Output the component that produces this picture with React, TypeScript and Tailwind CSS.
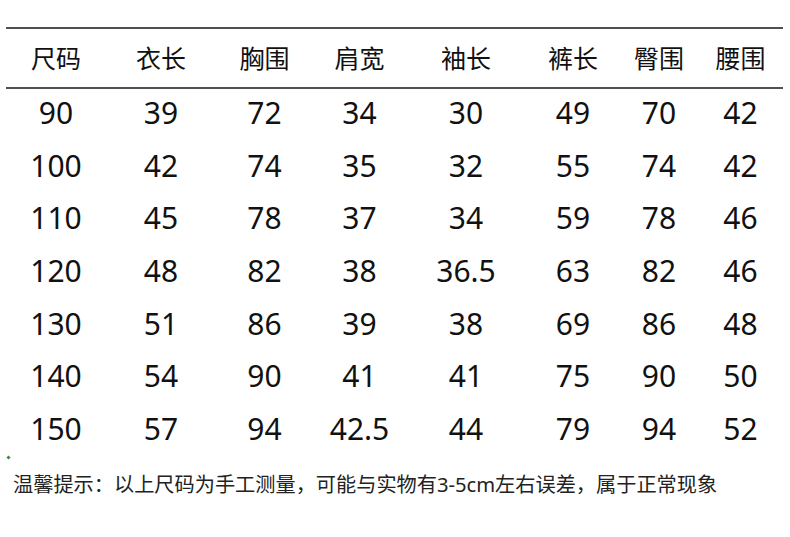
import React from "react";

const headers = ["尺码", "衣长", "胸围", "肩宽", "袖长", "裤长", "臀围", "腰围"];
const rows = [
  ["90", "39", "72", "34", "30", "49", "70", "42"],
  ["100", "42", "74", "35", "32", "55", "74", "42"],
  ["110", "45", "78", "37", "34", "59", "78", "46"],
  ["120", "48", "82", "38", "36.5", "63", "82", "46"],
  ["130", "51", "86", "39", "38", "69", "86", "48"],
  ["140", "54", "90", "41", "41", "75", "90", "50"],
  ["150", "57", "94", "42.5", "44", "79", "94", "52"],
];
const widths = ["w-[100px]", "w-[110px]", "w-[97px]", "w-[93px]", "w-[120px]", "w-[94px]", "w-[78px]", "w-[85px]"];

export default function App() {
  return (
    <div
      className="w-[790px] h-[537px] bg-white text-[#111] relative overflow-hidden"
      style={{ fontFamily: '"Noto Sans", "Noto Sans CJK SC", sans-serif' }}
    >
      <div className="pt-[27px] pl-[6px] w-[783px]">
        <div className="border-t-2 border-b-2 border-[#505050] h-[62px] flex items-center">
          {headers.map((h, i) => (
            <div key={i} className={`${widths[i]} text-center text-[25px] leading-none`}>
              {h}
            </div>
          ))}
        </div>
        <div className="-mt-[2px]">
          {rows.map((r, ri) => (
            <div key={ri} className="flex items-center h-[52.6px]">
              {r.map((c, ci) => (
                <div key={ci} className={`${widths[ci]} text-center text-[30px] leading-none`}>
                  {c}
                </div>
              ))}
            </div>
          ))}
        </div>
      </div>
      <div className="absolute left-[7px] top-[456px] w-[3px] h-[3px] bg-[#3a8a3a] rotate-45" />
      <div className="pl-[13px] pt-[19px] text-[20.2px] leading-none text-[#222]">
        温馨提示：以上尺码为手工测量，可能与实物有3-5cm左右误差，属于正常现象
      </div>
    </div>
  );
}
